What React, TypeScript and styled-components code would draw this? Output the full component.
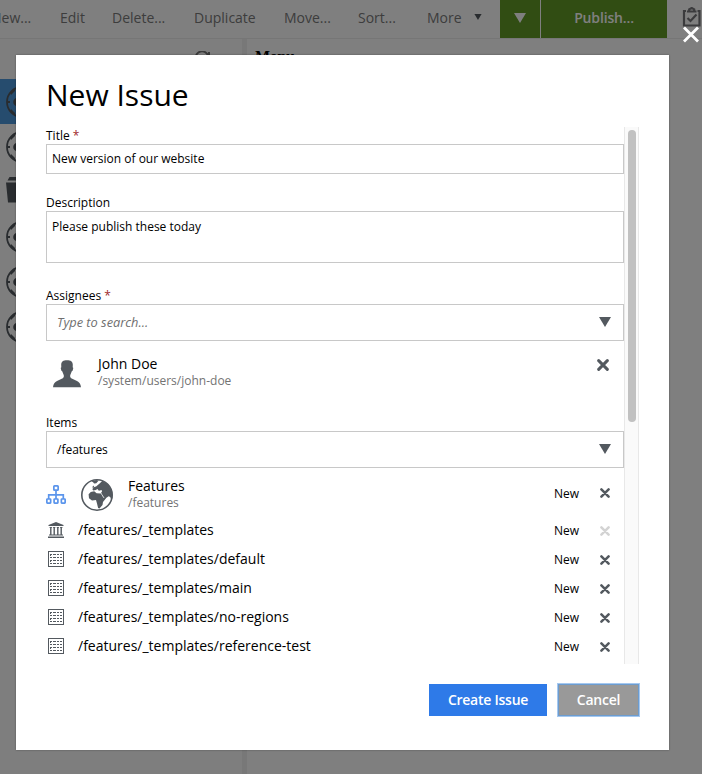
import React from 'react';
import styled, { createGlobalStyle } from 'styled-components';

const Global = createGlobalStyle`
  * { box-sizing: border-box; }
  html, body { margin: 0; padding: 0; height: 100%; overflow: hidden; }
  body { font-family: "Open Sans", "Noto Sans", sans-serif; background: #fff; color: #000; }
  svg { display: block; }
  button, input, textarea { font-family: inherit; }
`;

const Page = styled.div`
  position: relative;
  height: 774px;
  width: 702px;
  overflow: hidden;
  display: flex;
  flex-direction: column;
`;

const Toolbar = styled.header`
  display: flex;
  height: 39px;
  flex: none;
  border-bottom: 1px solid #ececec;
`;

const Action = styled.div<{ $w: number }>`
  width: ${p => p.$w}px;
  flex: none;
  font-size: 14px;
  line-height: 36px;
  color: #7a7a7a;
  white-space: nowrap;
`;

const Actions = styled.div`
  display: flex;
  margin-left: -9px;
  width: 509px;
  flex: none;
`;

const MoreAction = styled.div`
  display: flex;
  align-items: center;
  gap: 12px;
  height: 34px;
  font-size: 14px;
  color: #7a7a7a;
`;

const Publish = styled.div<{ $w: number }>`
  width: ${p => p.$w}px;
  flex: none;
  margin-right: 1px;
  display: flex;
  align-items: center;
  justify-content: center;
  background: #629a26;
  color: #fff;
  font-size: 14px;
  font-weight: 600;
  letter-spacing: -0.15px;
  padding-bottom: 3px;
`;

const ToolIcon = styled.div`
  padding: 7px 0 0 14px;
`;

const Panels = styled.div`
  display: flex;
  flex: 1;
`;

const TreePanel = styled.aside`
  width: 242px;
  background: #fdfdfd;
`;

const RefreshBar = styled.div`
  height: 40px;
  padding: 12px 0 0 195px;
`;

const TreeRow = styled.div<{ $selected?: boolean }>`
  height: 45px;
  padding: 7px 6px;
  background: ${p => (p.$selected ? '#4c98dc' : 'transparent')};
`;

const Splitter = styled.div`
  width: 5px;
  background: #f0f0f0;
`;

const Preview = styled.main`
  flex: 1;
  padding: 8px 8px;
  font: bold 16px/20px "Liberation Serif", serif;
`;

const Mask = styled.div`
  position: absolute;
  inset: 0;
  background: rgba(0, 0, 0, 0.5);
  padding: 55px 33px 24px 16px;
`;

const CloseButton = styled.div`
  position: absolute;
  left: 683px;
  top: 26px;
`;

const Dialog = styled.section`
  height: 695px;
  background: #fff;
  padding: 21px 30px 0;
  display: flex;
  flex-direction: column;
  box-shadow: 0 0 2px rgba(0, 0, 0, 0.35);
`;

const Heading = styled.h1`
  margin: 0;
  height: 51px;
  font-size: 30px;
  line-height: 38px;
  font-weight: 400;
`;

const ScrollView = styled.div`
  height: 537px;
  flex: none;
  display: flex;
`;

const Form = styled.div`
  width: 578px;
`;

const Track = styled.div`
  width: 15px;
  background: #fafafa;
  border: solid #e8e8e8;
  border-width: 0 1px;
  padding: 3px 2px 0 3px;
`;

const Thumb = styled.div`
  width: 8px;
  height: 292px;
  border-radius: 4px;
  background: #c1c1c1;
`;

const Field = styled.div<{ $h: number }>`
  height: ${p => p.$h}px;
`;

const Label = styled.label`
  display: block;
  height: 17px;
  line-height: 17px;
  font-size: 12px;
`;

const Required = styled.span`
  color: #a0282c;
`;

const TextInput = styled.input`
  display: block;
  width: 100%;
  height: 30px;
  border: 1px solid #c8c8c8;
  padding: 0 5px 1px;
  font-size: 12px;
  outline: none;
`;

const TextArea = styled.textarea`
  display: block;
  width: 100%;
  height: 52px;
  resize: none;
  border: 1px solid #c8c8c8;
  padding: 6px 5px;
  font-size: 12px;
  line-height: 17px;
  outline: none;
`;

const Combo = styled.div<{ $placeholder?: boolean }>`
  height: 37px;
  border: 1px solid #c8c8c8;
  display: flex;
  align-items: center;
  justify-content: space-between;
  padding: 0 12px 1px 10px;
  font-size: ${p => (p.$placeholder ? 12.8 : 12)}px;
  color: ${p => (p.$placeholder ? '#6f6f6f' : '#000')};
  font-style: ${p => (p.$placeholder ? 'italic' : 'normal')};
`;

const Assignee = styled.div`
  display: flex;
  height: 52px;
  margin-top: 14px;
  padding-left: 7px;
`;

const Names = styled.div`
  flex: 1;
`;

const Name = styled.div`
  font-size: 14px;
  line-height: 18px;
`;

const Path = styled.div`
  font-size: 12px;
  line-height: 16px;
  color: #737373;
`;

const ItemRow = styled.div`
  display: flex;
  height: 29px;
  font-size: 14px;
`;

const RootRow = styled(ItemRow)`
  height: 48px;
`;

const Cell = styled.div<{ $w: number; $top: number; $left?: number }>`
  width: ${p => p.$w}px;
  flex: none;
  padding: ${p => p.$top}px 0 0 ${p => p.$left ?? 0}px;
`;

const RowText = styled.div`
  flex: 1;
  line-height: 27px;
`;

const Status = styled.div<{ $line: number }>`
  width: 46px;
  font-size: 12px;
  line-height: ${p => p.$line}px;
`;

const Footer = styled.footer`
  display: flex;
  justify-content: flex-end;
  gap: 11px;
  padding-top: 20px;
`;

const Button = styled.button<{ $w: number; $muted?: boolean }>`
  width: ${p => p.$w}px;
  height: 32px;
  border: 0;
  padding: 0 0 1px;
  color: #fff;
  font-size: 14px;
  font-weight: 600;
  letter-spacing: -0.25px;
  background: ${p => (p.$muted ? '#999' : '#2e7ae8')};
  box-shadow: ${p => (p.$muted ? '0 0 0 1px #a5c8f0, inset 0 0 0 1px #6c9ccf' : 'none')};
`;

const Triangle = ({ w = 12, h = 10, color = '#53595f' }) => (
  <svg width={w} height={h} viewBox="0 0 12 10"><path d="M0 0h12L6 10z" fill={color} /></svg>
);

const Cross = ({ size = 10, color = '#53595f' }) => (
  <svg width={size} height={size} viewBox="0 0 10 10">
    <path d="M1.4 1.4l7.2 7.2M8.6 1.4L1.4 8.6" stroke={color} strokeWidth="2.5" strokeLinecap="round" />
  </svg>
);

const Globe = () => (
  <svg width="32" height="32" viewBox="0 0 32 32" fill="#53595f">
    <circle cx="16" cy="16" r="15.2" fill="none" stroke="#53595f" strokeWidth="1.6" />
    <path d="M10.5 2.2l5-1.2 2 .8-2.2 2.4-2.2.3-1-1.2z" />
    <path d="M18 5l3.5-3.2 5.7 3.5 4 7.5.2 6-1 2.6-1.2-3.4-1.6-.8-1.8 1.4-1.7 1.2-2-2.7-2-3.4 1-1.4-.6-1.2-2.6.7-1.5-1.9-1.6 1.2-2.6.4-.9-1.6 2-1.8 1.8-.6z" />
    <path d="M7.6 15.2l2.2-2.2 3.4-.7 2.4 1.9 4.3.2 2.3 4.2 2.8.7-3 3.8-.5 3-3 3.4-1.4-.5-1.1-4.6-1-3.3-4 .3-3-2.2z" />
    <path d="M11.2 8.2l1.2-1.8.7 1.4-.6 1.2z" />
  </svg>
);

const PartialGlobe = () => (
  <svg width="32" height="32" viewBox="0 0 32 32">
    <circle cx="16" cy="16" r="15" fill="none" stroke="#53595f" strokeWidth="1.8" />
    <path d="M1 15h3v2H1zM4 7l5-5v3L5 9zM4 25l5 5v-3l-4-4z" fill="#53595f" />
    <circle cx="11.5" cy="16" r="4.3" fill="#53595f" />
  </svg>
);

const Bin = () => (
  <svg width="32" height="32" viewBox="0 0 32 32" fill="#53595f">
    <path d="M3.5 1h18v3.5h-20zM0 6.5h27l-2 20H2z" />
  </svg>
);

const Person = () => (
  <svg width="28" height="28" viewBox="0 0 28 28" fill="#53595f">
    <path d="M8.2 4.8C8.2 1.6 10.2.2 14 .2s5.8 1.4 5.8 4.6l-.1 2.4.6.8-.7 2.8-.8.5-1.6 4v1.8l1 1.2 5.8 2.6c2.2 1.1 3.7 2.8 4 6.3H0c.3-3.5 1.8-5.2 4-6.3l5.8-2.6 1-1.2v-1.8l-1.6-4-.8-.5-.7-2.8.6-.8z" />
  </svg>
);

const Tree = () => (
  <svg width="20" height="19" viewBox="0 0 20 19" fill="none" stroke="#5b95ec" strokeWidth="1.7">
    <rect x="7.85" y=".85" width="4.3" height="4.3" rx=".7" />
    <rect x=".85" y="14" width="3.8" height="4.1" rx=".5" />
    <rect x="8.1" y="14" width="3.8" height="4.1" rx=".5" />
    <rect x="15.35" y="14" width="3.8" height="4.1" rx=".5" />
    <path d="M10 5v9M2.7 14v-4.2h14.6V14" />
  </svg>
);

const Temple = () => (
  <svg width="16" height="16" viewBox="0 0 16 16" fill="#53595f">
    <path d="M8 0l7.5 3v1H.5V3zM1.5 5h2.6v.8H1.5zM5 5h2.4v.8H5zM8.7 5H11v.8H8.7zM12 5h2.5v.8H12zM2.1 5.5h1.4v7H2.1zM5.5 5.5h1.4v7H5.5zM9.1 5.5h1.4v7H9.1zM12.5 5.5h1.4v7h-1.4zM1 12.4h14v1.1H1zM0 14.5h16V16H0z" />
  </svg>
);

const Template = () => (
  <svg width="16" height="16" viewBox="0 0 16 16" fill="none" stroke="#53595f" shapeRendering="crispEdges">
    <path d="M.5.5h15v15H.5z" />
    <path d="M2 3.5h12M2 6.5h12M2 9.5h12M2 12.5h12" strokeDasharray="2.25 1" />
    <path d="M2.5 3v1.5M13.5 5.5V7M2.5 9v1.5M13.5 11.5V13" />
  </svg>
);

const Clipboard = () => (
  <svg width="20" height="21" viewBox="0 0 20 21" fill="none" stroke="#77777b" strokeWidth="2.2">
    <path d="M4 4H2v14.5h15.5V4h-2" />
    <path d="M5 4.5h9.5M7.2 4V2.3L9.7 1l2.5 1.3V4M5.5 11l3 3 6-6.5" />
  </svg>
);

const dependants = [
  { path: '/features/_templates', root: true },
  { path: '/features/_templates/default' },
  { path: '/features/_templates/main' },
  { path: '/features/_templates/no-regions' },
  { path: '/features/_templates/reference-test' },
];

export default function App() {
  return (
    <>
      <Global />
      <Page>
        <Toolbar>
          <Actions>
            <Action $w={69}>New...</Action>
            <Action $w={52}>Edit</Action>
            <Action $w={82}>Delete...</Action>
            <Action $w={90}>Duplicate</Action>
            <Action $w={74}>Move...</Action>
            <Action $w={69}>Sort...</Action>
            <MoreAction>More<Triangle w={8} h={6} color="#53595f" /></MoreAction>
          </Actions>
          <Publish $w={40}><Triangle color="#fff" /></Publish>
          <Publish $w={126}>Publish...</Publish>
          <ToolIcon><Clipboard /></ToolIcon>
        </Toolbar>
        <Panels>
          <TreePanel>
            <RefreshBar>
              <svg width="16" height="16" viewBox="0 0 16 16" fill="none" stroke="#777" strokeWidth="2">
                <path d="M1 8a6 6 0 0 1 12-3M14 1v4h-5" />
              </svg>
            </RefreshBar>
            <TreeRow $selected><PartialGlobe /></TreeRow>
            <TreeRow><PartialGlobe /></TreeRow>
            <TreeRow><Bin /></TreeRow>
            <TreeRow><PartialGlobe /></TreeRow>
            <TreeRow><PartialGlobe /></TreeRow>
            <TreeRow><PartialGlobe /></TreeRow>
          </TreePanel>
          <Splitter />
          <Preview>Menu</Preview>
        </Panels>
        <Mask>
          <Dialog>
            <Heading>New Issue</Heading>
            <ScrollView>
              <Form>
                <Field $h={67}>
                  <Label>Title <Required>*</Required></Label>
                  <TextInput defaultValue="New version of our website" />
                </Field>
                <Field $h={93}>
                  <Label>Description</Label>
                  <TextArea defaultValue="Please publish these today" />
                </Field>
                <Field $h={127}>
                  <Label>Assignees <Required>*</Required></Label>
                  <Combo $placeholder>Type to search...<Triangle /></Combo>
                  <Assignee>
                    <Cell $w={45} $top={5}><Person /></Cell>
                    <Names>
                      <Name>John Doe</Name>
                      <Path>/system/users/john-doe</Path>
                    </Names>
                    <Cell $w={27} $top={4}><Cross size={12} /></Cell>
                  </Assignee>
                </Field>
                <Label>Items</Label>
                <Combo>/features<Triangle /></Combo>
                <RootRow>
                  <Cell $w={35} $top={17}><Tree /></Cell>
                  <Cell $w={47} $top={11}><Globe /></Cell>
                  <Cell $w={426} $top={9}>
                    <Name>Features</Name>
                    <Path>/features</Path>
                  </Cell>
                  <Status $line={51}>New</Status>
                  <Cell $w={20} $top={20}><Cross /></Cell>
                </RootRow>
                {dependants.map(d => (
                  <ItemRow key={d.path}>
                    <Cell $w={32} $top={6} $left={2}>{d.root ? <Temple /> : <Template />}</Cell>
                    <RowText>{d.path}</RowText>
                    <Status $line={29}>New</Status>
                    <Cell $w={24} $top={10}><Cross color={d.root ? '#d3d3d3' : '#53595f'} /></Cell>
                  </ItemRow>
                ))}
              </Form>
              <Track><Thumb /></Track>
            </ScrollView>
            <Footer>
              <Button $w={118}>Create Issue</Button>
              <Button $w={81} $muted>Cancel</Button>
            </Footer>
          </Dialog>
          <CloseButton>
            <svg width="16" height="17" viewBox="0 0 16 17"><path d="M1 1.5l14 14M15 1.5l-14 14" stroke="#fff" strokeWidth="2.8" /></svg>
          </CloseButton>
        </Mask>
      </Page>
    </>
  );
}
